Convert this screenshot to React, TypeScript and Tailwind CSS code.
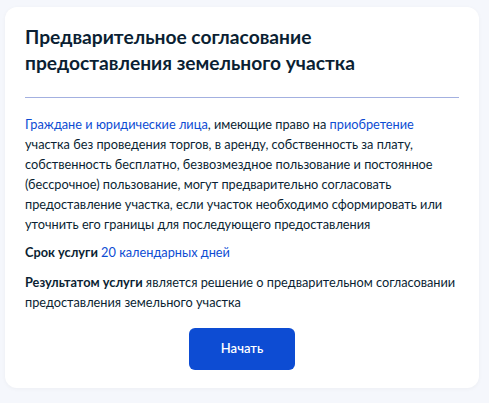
export default function App() {
  return (
    <div className="min-h-[403px] bg-[#f5f7fc] pl-[5px] pt-[7px] pb-[15px] font-['Lato','Noto_Sans',sans-serif] text-[#0b1f33]">
      <div className="w-[474px] rounded-[12px] bg-white px-5 pt-[17px] pb-[18px] shadow-[0_1px_4px_rgba(0,0,0,0.04)]">
        <h1 className="text-[19.2px] font-bold leading-[26px]">
          Предварительное согласование
          <br />
          предоставления земельного участка
        </h1>
        <hr className="mt-[21px] mb-[16px] border-t border-[#a3b0e0]" />
        <p className="text-[12.75px] leading-[20px]">
          <span className="text-[#0d4cd3]">Граждане и юридические лица</span>, имеющие право на{' '}
          <span className="text-[#0d4cd3]">приобретение</span> участка без проведения торгов, в аренду,
          собственность за плату, собственность бесплатно, безвозмездное пользование и постоянное
          (бессрочное) пользование, могут предварительно согласовать предоставление участка, если участок
          необходимо сформировать или уточнить его границы для последующего предоставления
        </p>
        <p className="mt-2 text-[12.75px] leading-[20px]">
          <span className="font-bold">Срок услуги</span>{' '}
          <span className="text-[#0d4cd3]">20 календарных дней</span>
        </p>
        <p className="mt-[10px] text-[12.75px] leading-[20px]">
          <span className="whitespace-nowrap">
            <span className="font-bold">Результатом услуги</span> является решение о предварительном согласовании
          </span>{' '}
          предоставления земельного участка
        </p>
        <div className="mt-[16px] flex justify-center">
          <button className="h-[42px] w-[106px] rounded-[6px] bg-[#0d4cd3] text-[13px] font-semibold text-white">
            Начать
          </button>
        </div>
      </div>
    </div>
  );
}
